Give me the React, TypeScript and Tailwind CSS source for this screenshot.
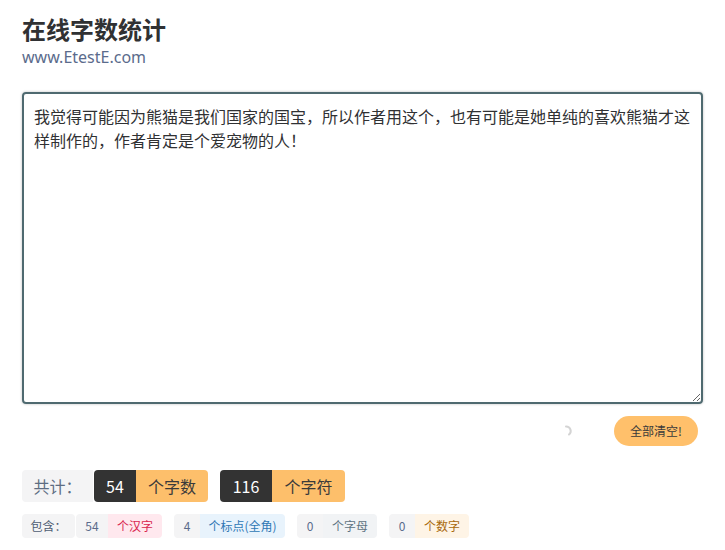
import { useState } from "react";

const initialText =
  "我觉得可能因为熊猫是我们国家的国宝，所以作者用这个，也有可能是她单纯的喜欢熊猫才这样制作的，作者肯定是个爱宠物的人！";

export default function App() {
  const [text, setText] = useState(initialText);

  const tags = [
    { n: 54, label: "个汉字", cls: "bg-[#ffe8ee] text-[#d9254f]", w: "w-[54px]" },
    { n: 4, label: "个标点(全角)", cls: "bg-[#e8f3fc] text-[#2f78b5]", w: "w-[85px]" },
    { n: 0, label: "个字母", cls: "bg-[#f1f3f5] text-[#5f7383]", w: "w-[54px]" },
    { n: 0, label: "个数字", cls: "bg-[#fef4e6] text-[#a8690c]", w: "w-[54px]" },
  ];

  return (
    <div
      className="min-h-[550px] bg-white px-[22px] pt-[15px]"
      style={{ fontFamily: '"Noto Sans", "Noto Sans CJK SC", sans-serif' }}
    >
      <h1 className="text-[24px] font-bold leading-[30px] text-[#303133]">在线字数统计</h1>
      <div className="mt-[2px] text-[16px] leading-[20px] text-[#5b6b8c]">www.EtestE.com</div>

      <textarea
        value={text}
        onChange={(e) => setText(e.target.value)}
        className="mt-[25px] block h-[312px] w-full resize-y rounded-[4px] border-2 border-[#4f6a70] px-[10px] py-[10px] text-[16px] leading-[24px] text-[#303133] shadow-[0_0_2px_1px_rgba(0,0,0,0.12)] outline-none"
        style={{ fontFamily: '"Noto Sans CJK SC", sans-serif' }}
      />

      {/* actions */}
      <div className="mt-[12px] flex items-center justify-end pr-[5px]">
        <svg width="10" height="12" viewBox="0 0 10 12" className="mr-[40px]">
          <path d="M2 1.5 A4.5 4.5 0 0 1 5 9.5" fill="none" stroke="#d4d4d4" strokeWidth="2" strokeLinecap="round" />
        </svg>
        <button
          onClick={() => setText("")}
          className="h-[30px] w-[84px] rounded-full bg-[#ffc06b] text-[12px] text-[#3a3a3a]"
          style={{ fontFamily: '"Noto Sans CJK SC", sans-serif' }}
        >
          全部清空!
        </button>
      </div>

      {/* totals */}
      <div className="mt-[24px] flex h-[32px] items-stretch text-[16px]" style={{ fontFamily: '"Noto Sans CJK SC", sans-serif' }}>
        <div className="flex w-[71px] items-center justify-center rounded-l-[4px] bg-[#f4f4f5] text-[#5e6d82]">共计：</div>
        <div className="ml-px flex w-[42px] items-center justify-center rounded-l-[4px] bg-[#333333] text-white">{text.length ? 54 : 0}</div>
        <div className="flex w-[72px] items-center justify-center rounded-r-[4px] bg-[#fdbf6b] text-[#3a3a3a]">个字数</div>
        <div className="ml-[12px] flex w-[52px] items-center justify-center rounded-l-[4px] bg-[#333333] text-white">{text.length ? 116 : 0}</div>
        <div className="flex w-[73px] items-center justify-center rounded-r-[4px] bg-[#fdbf6b] text-[#3a3a3a]">个字符</div>
      </div>

      {/* breakdown */}
      <div className="mt-[12px] flex h-[24px] items-stretch text-[12px]" style={{ fontFamily: '"Noto Sans CJK SC", sans-serif' }}>
        <div className="flex w-[53px] items-center justify-center rounded-[4px] bg-[#f4f4f5] text-[#4f5d73]">包含：</div>
        {tags.map((t, i) => (
          <div key={i} className={`flex ${i === 0 ? "ml-px" : "ml-[12px]"}`}>
            <div className="flex w-[26px] items-center justify-center rounded-l-[4px] bg-[#f4f4f5] text-[#5b6b8c]" style={i === 0 ? { width: 32 } : undefined}>
              {text.length ? t.n : 0}
            </div>
            <div className={`flex ${t.w} items-center justify-center rounded-r-[4px] ${t.cls}`}>{t.label}</div>
          </div>
        ))}
      </div>
    </div>
  );
}
